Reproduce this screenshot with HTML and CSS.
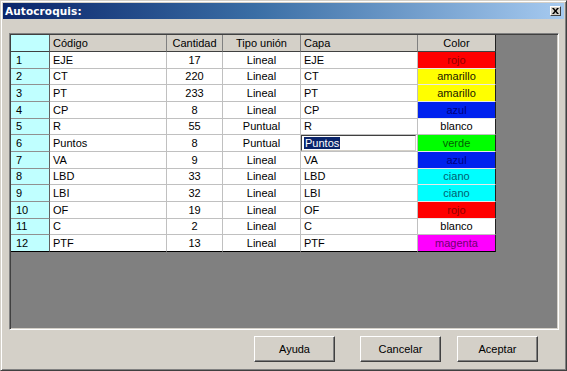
FILE: index.html
```html
<!DOCTYPE html>
<html>
<head>
<meta charset="utf-8">
<link rel="stylesheet" href="styles.css">
</head>
<body>
<div class="dialog">
  <div class="titlebar">
    <span class="title">Autocroquis:</span>
    <span class="close"><svg width="7" height="6" viewBox="0 0 7 6"><path d="M0 0h2l1.5 2L5 0h2L4.5 3 7 6H5L3.5 4 2 6H0l2.5-3z" fill="#000"/></svg></span>
  </div>
  <div class="gridwrap">
    <div class="grid">
      <div class="cell rh corner"></div>
      <div class="cell hd left">Código</div>
      <div class="cell hd center">Cantidad</div>
      <div class="cell hd center">Tipo unión</div>
      <div class="cell hd left">Capa</div>
      <div class="cell hd center last">Color</div>

      <div class="cell rh">1</div><div class="cell left">EJE</div><div class="cell center">17</div><div class="cell center">Lineal</div><div class="cell left">EJE</div><div class="cell center last c-rojo">rojo</div>
      <div class="cell rh">2</div><div class="cell left">CT</div><div class="cell center">220</div><div class="cell center">Lineal</div><div class="cell left">CT</div><div class="cell center last c-amarillo">amarillo</div>
      <div class="cell rh">3</div><div class="cell left">PT</div><div class="cell center">233</div><div class="cell center">Lineal</div><div class="cell left">PT</div><div class="cell center last c-amarillo">amarillo</div>
      <div class="cell rh">4</div><div class="cell left">CP</div><div class="cell center">8</div><div class="cell center">Lineal</div><div class="cell left">CP</div><div class="cell center last c-azul">azul</div>
      <div class="cell rh">5</div><div class="cell left">R</div><div class="cell center">55</div><div class="cell center">Puntual</div><div class="cell left">R</div><div class="cell center last c-blanco">blanco</div>
      <div class="cell rh">6</div><div class="cell left">Puntos</div><div class="cell center">8</div><div class="cell center">Puntual</div><div class="cell editcell"><div class="edit"><span class="sel">Puntos</span></div></div><div class="cell center last c-verde">verde</div>
      <div class="cell rh">7</div><div class="cell left">VA</div><div class="cell center">9</div><div class="cell center">Lineal</div><div class="cell left">VA</div><div class="cell center last c-azul">azul</div>
      <div class="cell rh">8</div><div class="cell left">LBD</div><div class="cell center">33</div><div class="cell center">Lineal</div><div class="cell left">LBD</div><div class="cell center last c-ciano">ciano</div>
      <div class="cell rh">9</div><div class="cell left">LBI</div><div class="cell center">32</div><div class="cell center">Lineal</div><div class="cell left">LBI</div><div class="cell center last c-ciano">ciano</div>
      <div class="cell rh">10</div><div class="cell left">OF</div><div class="cell center">19</div><div class="cell center">Lineal</div><div class="cell left">OF</div><div class="cell center last c-rojo">rojo</div>
      <div class="cell rh">11</div><div class="cell left">C</div><div class="cell center">2</div><div class="cell center">Lineal</div><div class="cell left">C</div><div class="cell center last c-blanco">blanco</div>
      <div class="cell rh bottom">12</div><div class="cell left bottom">PTF</div><div class="cell center bottom">13</div><div class="cell center bottom">Lineal</div><div class="cell left bottom">PTF</div><div class="cell center last bottom c-magenta">magenta</div>
    </div>
  </div>
  <div class="buttons">
    <div class="btn">Ayuda</div>
    <div class="btn btn-cancel">Cancelar</div>
    <div class="btn btn-ok">Aceptar</div>
  </div>
</div>
</body>
</html>
```
FILE: styles.css
```css
html, body {
  margin: 0;
  padding: 0;
  background: #d4d0c8;
}
body {
  font-family: "Liberation Sans", Arial, sans-serif;
  font-size: 11px;
  color: #000;
}
.dialog {
  width: 567px;
  height: 371px;
  box-sizing: border-box;
  background: #d4d0c8;
  border: 1px solid;
  border-color: #d4d0c8 #404040 #404040 #d4d0c8;
  box-shadow: inset 1px 1px 0 #fff, inset -1px -1px 0 #808080;
  padding: 2px;
}
.titlebar {
  height: 16px;
  display: flex;
  align-items: center;
  justify-content: space-between;
  background: linear-gradient(to right, #0a246a 0%, #3a6ea5 45%, #a6caf0 100%);
  padding: 0 2px 0 2px;
}
.title {
  color: #fff;
  font-weight: bold;
  font-size: 11px;
  letter-spacing: 0.1px;
  font-family: "DejaVu Sans", "Liberation Sans", sans-serif;
  font-size: 10.5px;
}
.close {
  width: 11px;
  height: 10px;
  box-sizing: border-box;
  background: #d4d0c8;
  border: 1px solid;
  border-color: #fff #404040 #404040 #fff;
  display: flex;
  align-items: center;
  justify-content: center;
  margin-right: 1px;
}
.gridwrap {
  margin: 14px 0 0 6px;
  width: 550px;
  height: 297px;
  box-sizing: border-box;
  background: #808080;
  border: 1px solid;
  border-color: #808080 #fff #fff #808080;
  box-shadow: inset 1px 1px 0 #404040, inset -1px -1px 0 #d4d0c8;
  padding: 1px;
}
.grid {
  display: grid;
  grid-template-columns: 39px 117px 56px 78px 117px 78px;
  grid-template-rows: 17px repeat(12, 16.667px);
  width: 485px;
}
.cell {
  box-sizing: border-box;
  background: #fff;
  border-right: 1px solid #c0c0c0;
  border-bottom: 1px solid #c0c0c0;
  display: flex;
  align-items: center;
  white-space: nowrap;
  overflow: hidden;
  padding: 0 3px;
}
.left { justify-content: flex-start; }
.center { justify-content: center; }
.rh {
  background: #c0ffff;
  border-right: 1px solid #606060;
  border-bottom: 1px solid #909090;
  padding-left: 5px;
}
.hd {
  background: #d4d0c8;
  border-right: 1px solid #808080;
  border-bottom: 1px solid #404040;
}
.corner {
  border-bottom: 1px solid #404040;
}
.last {
  border-right: 1px solid #202020;
}
.bottom {
  border-bottom: 1px solid #000;
}
.c-rojo { background: #ff0000; color: #900000; border-bottom-color: #e8e8e8; }
.c-amarillo { background: #ffff00; color: #202000; border-bottom-color: #e8e8e8; }
.c-azul { background: #0022ee; color: #000080; border-bottom-color: #e8e8e8; }
.c-blanco { background: #fff; color: #000; }
.c-verde { background: #00ff00; color: #006000; border-bottom-color: #e8e8e8; }
.c-ciano { background: #00ffff; color: #006070; border-bottom-color: #e8e8e8; }
.c-magenta { background: #ff00ff; color: #700070; border-bottom-color: #e8e8e8; }
.c-magenta.bottom { border-bottom-color: #000; }
.editcell {
  padding: 0;
  align-items: stretch;
}
.edit {
  flex: 1;
  margin-right: 1px;
  box-sizing: border-box;
  border: 1px solid;
  border-color: #404040 #d4d0c8 #d4d0c8 #404040;
  background: #fff;
  display: flex;
  align-items: center;
  padding-left: 2px;
}
.sel {
  background: #0a246a;
  color: #fff;
  padding: 0 1px;
  line-height: 12px;
}
.buttons {
  display: flex;
  margin: 6px 0 0 251px;
}
.btn {
  width: 81px;
  height: 26px;
  box-sizing: border-box;
  border: 1px solid;
  border-color: #fff #404040 #404040 #fff;
  box-shadow: inset -1px -1px 0 #808080;
  display: flex;
  align-items: center;
  justify-content: center;
}
.btn-cancel { margin-left: 25px; }
.btn-ok { margin-left: 16px; }
```
